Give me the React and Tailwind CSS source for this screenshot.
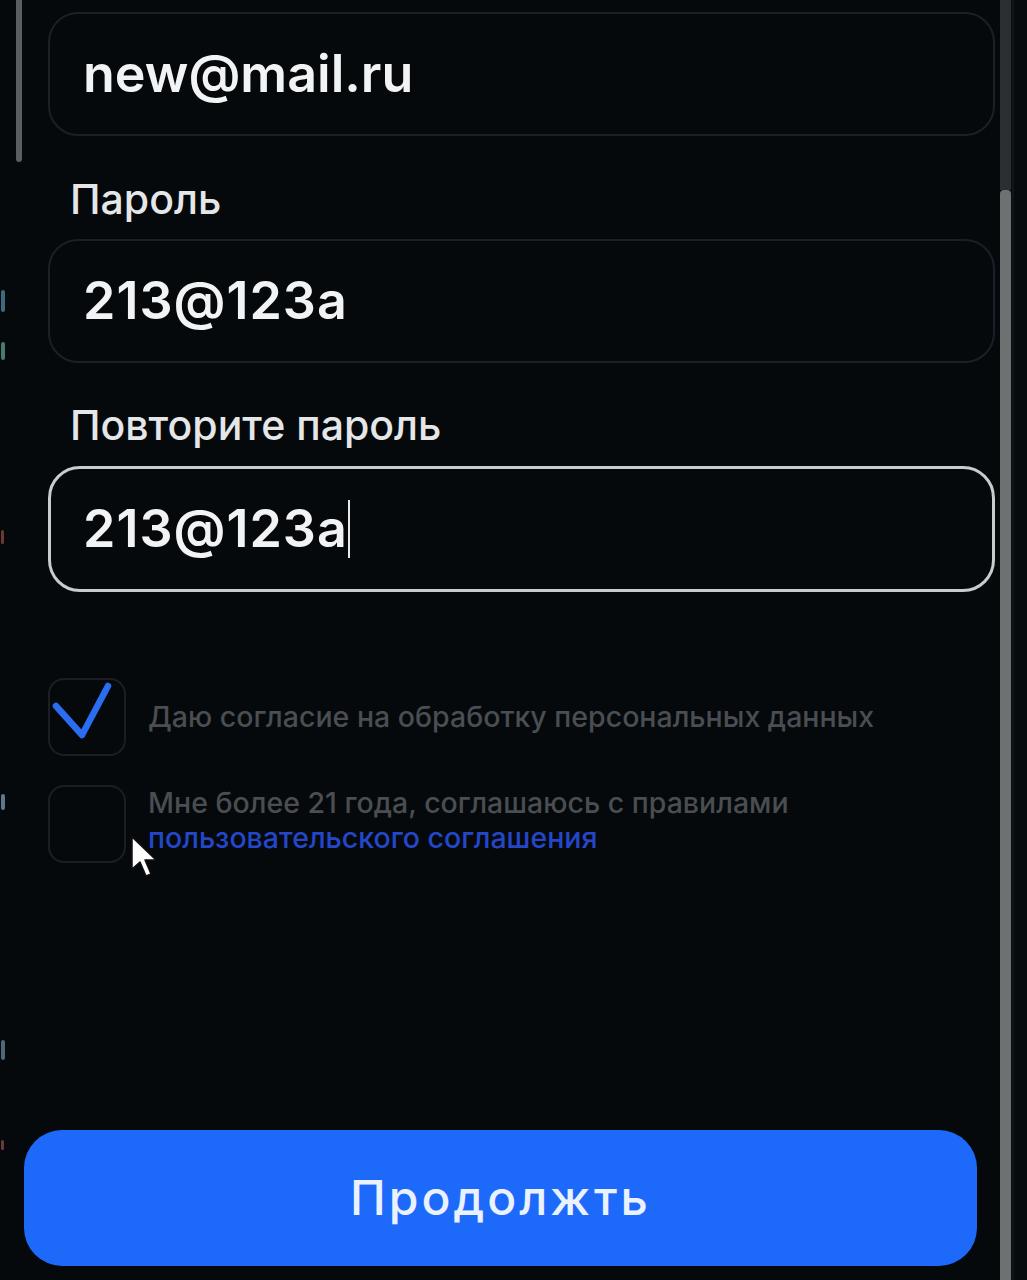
export default function App() {
  const font = { fontFamily: "Inter, 'Noto Sans', sans-serif" };

  return (
    <div
      className="w-[1027px] h-[1280px] bg-[#05090c] flex overflow-hidden text-white"
      style={font}
    >
      {/* left edge with stray marks */}
      <div className="w-[16px] flex flex-col">
        <div className="h-[290px]" />
        <div className="ml-[1px] w-[4px] h-[22px] rounded-sm bg-[#3e6a80]" />
        <div className="h-[30px]" />
        <div className="ml-[1px] w-[4px] h-[18px] rounded-sm bg-[#4a7a6a]" />
        <div className="h-[170px]" />
        <div className="ml-[1px] w-[3px] h-[14px] rounded-sm bg-[#6a3a30]" />
        <div className="h-[250px]" />
        <div className="ml-[1px] w-[4px] h-[16px] rounded-sm bg-[#5a7890]" />
        <div className="h-[230px]" />
        <div className="ml-[1px] w-[4px] h-[20px] rounded-sm bg-[#4d6878]" />
        <div className="h-[80px]" />
        <div className="ml-[1px] w-[3px] h-[10px] rounded-sm bg-[#6a3a38]" />
      </div>

      {/* left scroll indicator */}
      <div className="w-[8px] flex flex-col">
        <div className="w-[6px] h-[162px] rounded-b-full bg-[#5b5e61]" />
      </div>

      {/* content */}
      <div className="w-[976px] flex flex-col">
        <div className="pl-[24px] pt-[12px] flex flex-col">
          <div className="w-[947px] h-[124px] rounded-[30px] border-2 border-[#1c2026] flex items-center pl-[33px]">
            <span className="text-[52px] font-semibold text-[#f1f3f4]">
              new@mail.ru
            </span>
          </div>

          <div className="pl-[22px] mt-[42px] h-[44px] flex items-center text-[41px] font-medium text-[#e4e6e8]">
            Пароль
          </div>

          <div className="mt-[17px] w-[947px] h-[124px] rounded-[30px] border-2 border-[#1c2026] flex items-center pl-[33px]">
            <span className="text-[52px] font-semibold tracking-[1px] text-[#f1f3f4]">
              213@123a
            </span>
          </div>

          <div className="pl-[22px] mt-[41px] h-[44px] flex items-center text-[41px] font-medium text-[#e4e6e8]">
            Повторите пароль
          </div>

          <div className="mt-[18px] w-[947px] h-[126px] rounded-[32px] border-[3px] border-[#c9cbcc] flex items-center pl-[32px]">
            <span className="text-[52px] font-semibold tracking-[1px] text-[#f1f3f4]">
              213@123a
            </span>
            <span className="w-[2px] h-[58px] bg-[#e8e8e8]" />
          </div>

          {/* checkboxes */}
          <div className="mt-[86px] flex items-center gap-[22px]">
            <div className="relative w-[78px] h-[78px] rounded-[16px] border-2 border-[#1b1f25]">
              <svg
                className="absolute -left-[2px] -top-[2px]"
                width="78"
                height="78"
                viewBox="0 0 78 78"
                fill="none"
              >
                <path
                  d="M8 28 L 34 57 L 60 8"
                  stroke="#2a6cf2"
                  strokeWidth="6.5"
                  strokeLinecap="round"
                  strokeLinejoin="round"
                />
              </svg>
            </div>
            <span className="text-[28.5px] font-medium text-[#4a4d52]">
              Даю согласие на обработку персональных данных
            </span>
          </div>

          <div className="mt-[29px] flex items-start gap-[22px] relative">
            <div className="w-[78px] h-[78px] rounded-[16px] border-2 border-[#1b1f25]" />
            <div className="text-[28.5px] font-medium leading-[35px]">
              <div className="text-[#4a4d52]">
                Мне более 21 года, соглашаюсь с правилами
              </div>
              <div className="text-[#2447c9]">пользовательского соглашения</div>
            </div>
            {/* mouse pointer */}
            <svg
              className="absolute left-[82px] top-[50px]"
              width="30"
              height="44"
              viewBox="0 0 30 44"
            >
              <path
                d="M2 2 L2 34 L10 27 L16 41 L21 39 L15 25 L26 25 Z"
                fill="#ffffff"
                stroke="#111"
                strokeWidth="1.5"
                strokeLinejoin="round"
              />
            </svg>
          </div>
        </div>

        <div className="flex-1" />

        <button className="mb-[14px] w-[953px] h-[136px] rounded-[38px] bg-[#1d6afa] flex items-center justify-center">
          <span className="text-[48px] font-medium text-[#eaf1ff] tracking-[3px]">
            Продолжть
          </span>
        </button>
      </div>

      {/* right scrollbar */}
      <div className="w-[12px] flex flex-col bg-[#090c0f]">
        <div className="h-[190px] w-[11px] bg-[#2c2f32]" />
        <div className="flex-1 w-[11px] rounded-t-[4px] bg-[#6d7172]" />
      </div>

      {/* right edge */}
      <div className="w-[15px] bg-[#080b0e] border-l-2 border-[#111519]" />
    </div>
  );
}
